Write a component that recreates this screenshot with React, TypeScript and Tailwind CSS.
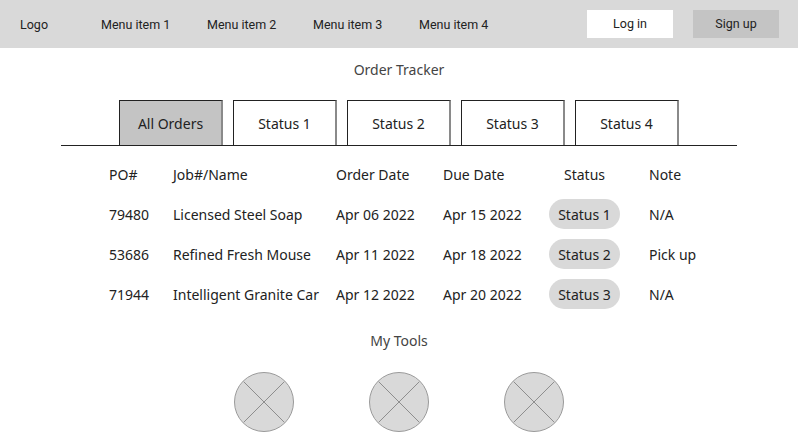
const menuItems = ['Menu item 1', 'Menu item 2', 'Menu item 3', 'Menu item 4'];
const tabs = ['All Orders', 'Status 1', 'Status 2', 'Status 3', 'Status 4'];

const orders = [
  { po: '79480', job: 'Licensed Steel Soap', ordered: 'Apr 06 2022', due: 'Apr 15 2022', status: 'Status 1', note: 'N/A' },
  { po: '53686', job: 'Refined Fresh Mouse', ordered: 'Apr 11 2022', due: 'Apr 18 2022', status: 'Status 2', note: 'Pick up' },
  { po: '71944', job: 'Intelligent Granite Car', ordered: 'Apr 12 2022', due: 'Apr 20 2022', status: 'Status 3', note: 'N/A' },
];

const cols = 'grid grid-cols-[64px_163px_107px_106px_100px_1fr] items-center h-10';

function ToolPlaceholder() {
  return (
    <div className="w-[60px] h-[60px] rounded-full bg-[#d9d9d9] border border-[#9a9a9a] overflow-hidden">
      <svg viewBox="0 0 60 60" className="w-full h-full">
        <line x1="8.8" y1="8.8" x2="51.2" y2="51.2" stroke="#8a8a8a" strokeWidth="1" />
        <line x1="51.2" y1="8.8" x2="8.8" y2="51.2" stroke="#8a8a8a" strokeWidth="1" />
      </svg>
    </div>
  );
}

export default function App() {
  return (
    <div className="w-[798px] h-[448px] bg-white overflow-hidden font-['Noto_Sans',sans-serif] text-[#222]">
      {/* Top nav */}
      <nav className="h-12 bg-[#d9d9d9] flex items-center pl-5 pr-[19px] text-[12.5px] font-['Roboto',sans-serif]">
        <span className="w-[81px] pt-[3px]">Logo</span>
        <div className="flex pt-[3px]">
          {menuItems.map((item) => (
            <span key={item} className="w-[106px]">{item}</span>
          ))}
        </div>
        <div className="ml-auto flex gap-5">
          <button className="w-[86px] h-7 bg-white pt-px">Log in</button>
          <button className="w-[86px] h-7 bg-[#c4c4c4] pt-px">Sign up</button>
        </div>
      </nav>

      {/* Title */}
      <div className="h-[42px] flex items-center justify-center text-[14px] text-[#444]">Order Tracker</div>

      {/* Tabs */}
      <div className="mx-[61px] mt-[10px] border-b border-[#222] flex justify-center gap-[10px]">
        {tabs.map((tab, i) => (
          <div
            key={tab}
            className={`w-[104px] h-[45px] flex items-center justify-center text-[14px] border border-b-0 border-[#222] border-r-2 border-r-[#8a8a8a] ${i === 0 ? 'bg-[#c4c4c4]' : 'bg-white'}`}
          >
            {tab}
          </div>
        ))}
      </div>

      {/* Orders table */}
      <div className="pl-[109px] mt-[8px] text-[14px]">
        <div className={cols}>
          <span>PO#</span>
          <span>Job#/Name</span>
          <span>Order Date</span>
          <span>Due Date</span>
          <span className="w-[71px] text-center">Status</span>
          <span>Note</span>
        </div>
        {orders.map((o) => (
          <div key={o.po} className={cols}>
            <span>{o.po}</span>
            <span>{o.job}</span>
            <span>{o.ordered}</span>
            <span>{o.due}</span>
            <span className="w-[71px] h-[30px] rounded-full bg-[#d9d9d9] flex items-center justify-center">{o.status}</span>
            <span>{o.note}</span>
          </div>
        ))}
      </div>

      {/* Tools */}
      <div className="mt-[11px] h-[30px] flex items-center justify-center text-[14px] text-[#444]">My Tools</div>
      <div className="mt-[17px] flex justify-center gap-[75px]">
        <ToolPlaceholder />
        <ToolPlaceholder />
        <ToolPlaceholder />
      </div>
    </div>
  );
}
